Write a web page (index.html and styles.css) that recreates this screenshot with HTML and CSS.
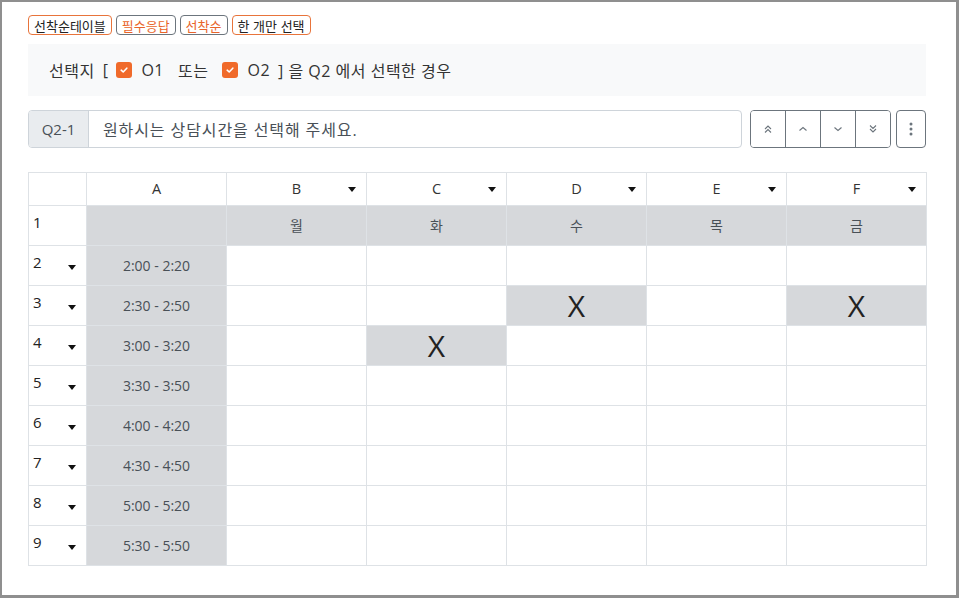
FILE: index.html
```html
<!DOCTYPE html>
<html lang="ko">
<head>
<meta charset="utf-8">
<link rel="stylesheet" href="styles.css">
</head>
<body>
<div class="frame">
  <div class="badges">
    <span class="badge badge-o">선착순테이블</span>
    <span class="badge badge-g">필수응답</span>
    <span class="badge badge-g">선착순</span>
    <span class="badge badge-o">한 개만 선택</span>
  </div>
  <div class="cond">
    <span>선택지</span><span class="br">[</span>
    <span class="chk"><svg width="10" height="10" viewBox="0 0 10 10"><path d="M2.2 5.2 L4.2 7 L7.8 3.2" fill="none" stroke="#fff" stroke-width="1.6" stroke-linecap="round" stroke-linejoin="round"/></svg></span>
    <span class="opt">O1</span><span class="or">또는</span>
    <span class="chk"><svg width="10" height="10" viewBox="0 0 10 10"><path d="M2.2 5.2 L4.2 7 L7.8 3.2" fill="none" stroke="#fff" stroke-width="1.6" stroke-linecap="round" stroke-linejoin="round"/></svg></span>
    <span class="opt">O2</span><span>] 을 Q2 에서 선택한 경우</span>
  </div>
  <div class="qrow">
    <div class="igroup">
      <span class="iprefix">Q2-1</span>
      <span class="ifield">원하시는 상담시간을 선택해 주세요.</span>
    </div>
    <div class="btngroup">
      <button class="btn"><svg width="12" height="12" viewBox="0 0 12 12"><path d="M3 6 L6 3 L9 6 M3 9.5 L6 6.5 L9 9.5" fill="none" stroke="#6c757d" stroke-width="1.1"/></svg></button>
      <button class="btn"><svg width="12" height="12" viewBox="0 0 12 12"><path d="M2.5 7.5 L6 4.5 L9.5 7.5" fill="none" stroke="#6c757d" stroke-width="1.1"/></svg></button>
      <button class="btn"><svg width="12" height="12" viewBox="0 0 12 12"><path d="M2.5 4.5 L6 7.5 L9.5 4.5" fill="none" stroke="#6c757d" stroke-width="1.1"/></svg></button>
      <button class="btn"><svg width="12" height="12" viewBox="0 0 12 12"><path d="M3 2.5 L6 5.5 L9 2.5 M3 6 L6 9 L9 6" fill="none" stroke="#6c757d" stroke-width="1.1"/></svg></button>
    </div>
    <button class="btn kebab"><svg width="4" height="14" viewBox="0 0 4 14"><circle cx="2" cy="2" r="1.5" fill="#6c757d"/><circle cx="2" cy="7" r="1.5" fill="#6c757d"/><circle cx="2" cy="12" r="1.5" fill="#6c757d"/></svg></button>
  </div>
  <table class="grid">
    <colgroup><col class="c0"><col class="cw"><col class="cw"><col class="cw"><col class="cw"><col class="cw"><col class="cw"></colgroup>
    <thead>
      <tr>
        <th></th>
        <th><div class="hd">A</div></th>
        <th><div class="hd">B<i class="caret"></i></div></th>
        <th><div class="hd">C<i class="caret"></i></div></th>
        <th><div class="hd">D<i class="caret"></i></div></th>
        <th><div class="hd">E<i class="caret"></i></div></th>
        <th><div class="hd">F<i class="caret"></i></div></th>
      </tr>
    </thead>
    <tbody>
      <tr>
        <td class="rh"><div class="rhin"><span>1</span></div></td>
        <td class="g"></td><td class="g">월</td><td class="g">화</td><td class="g">수</td><td class="g">목</td><td class="g">금</td>
      </tr>
      <tr>
        <td class="rh"><div class="rhin"><span>2</span><i class="caret"></i></div></td>
        <td class="g">2:00 - 2:20</td><td></td><td></td><td></td><td></td><td></td>
      </tr>
      <tr>
        <td class="rh"><div class="rhin"><span>3</span><i class="caret"></i></div></td>
        <td class="g">2:30 - 2:50</td><td></td><td></td><td class="g x">X</td><td></td><td class="g x">X</td>
      </tr>
      <tr>
        <td class="rh"><div class="rhin"><span>4</span><i class="caret"></i></div></td>
        <td class="g">3:00 - 3:20</td><td></td><td class="g x">X</td><td></td><td></td><td></td>
      </tr>
      <tr>
        <td class="rh"><div class="rhin"><span>5</span><i class="caret"></i></div></td>
        <td class="g">3:30 - 3:50</td><td></td><td></td><td></td><td></td><td></td>
      </tr>
      <tr>
        <td class="rh"><div class="rhin"><span>6</span><i class="caret"></i></div></td>
        <td class="g">4:00 - 4:20</td><td></td><td></td><td></td><td></td><td></td>
      </tr>
      <tr>
        <td class="rh"><div class="rhin"><span>7</span><i class="caret"></i></div></td>
        <td class="g">4:30 - 4:50</td><td></td><td></td><td></td><td></td><td></td>
      </tr>
      <tr>
        <td class="rh"><div class="rhin"><span>8</span><i class="caret"></i></div></td>
        <td class="g">5:00 - 5:20</td><td></td><td></td><td></td><td></td><td></td>
      </tr>
      <tr>
        <td class="rh"><div class="rhin"><span>9</span><i class="caret"></i></div></td>
        <td class="g">5:30 - 5:50</td><td></td><td></td><td></td><td></td><td></td>
      </tr>
    </tbody>
  </table>
</div>
</body>
</html>
```

FILE: styles.css
```css
* { box-sizing: border-box; }
html, body { margin: 0; padding: 0; background: #fff; }
body {
  font-family: "Open Sans", "Noto Sans", "Noto Sans CJK KR", sans-serif;
  color: #333;
}
.frame {
  width: 959px;
  height: 598px;
  border: 2px solid #8f8f8f;
  border-right-width: 3px;
  border-bottom-width: 3px;
  padding: 13px 0 0 26px;
}
.badges { display: flex; gap: 4px; height: 20px; }
.badge {
  display: inline-flex;
  align-items: center;
  height: 20px;
  padding: 0 5px;
  border: 1px solid #e8743b;
  border-radius: 4px;
  font-family: "Noto Sans CJK KR", sans-serif;
  font-size: 13px;
  color: #222;
}
.badge-g { border-color: #6c757d; color: #e8642a; }
.cond {
  margin-top: 9px;
  width: 898px;
  height: 52px;
  background: #f8f9fa;
  display: flex;
  align-items: center;
  padding-left: 21px;
  font-size: 16px;
  letter-spacing: 0.5px;
  color: #333;
  font-family: "Open Sans", "Noto Sans CJK KR", sans-serif;
}
.br { margin-left: 8px; margin-right: 8px; }
.chk {
  width: 16px; height: 16px;
  border-radius: 3px;
  background: #f06a2a;
  display: inline-flex; align-items: center; justify-content: center;
}
.opt { margin-left: 9px; margin-right: 8px; }
.or { margin-left: 6px; margin-right: 14px; }
.qrow { margin-top: 14px; display: flex; width: 898px; height: 38px; }
.igroup {
  width: 714px;
  display: flex;
  border: 1px solid #ced4da;
  border-radius: 4px;
  overflow: hidden;
}
.iprefix {
  width: 60px;
  background: #e9ecef;
  border-right: 1px solid #ced4da;
  display: flex; align-items: center; justify-content: center;
  font-size: 15px; color: #495057;
}
.ifield {
  display: flex; align-items: center;
  padding-left: 14px;
  font-size: 16px; color: #495057;
  letter-spacing: 0.9px;
}
.btngroup {
  margin-left: 8px;
  display: flex;
  border: 1px solid #6c757d;
  border-radius: 4px;
  overflow: hidden;
  width: 141px;
}
.btn {
  background: #fff;
  border: 0;
  padding: 0;
  display: flex; align-items: center; justify-content: center;
  flex: 1;
  height: 100%;
}
.btngroup .btn + .btn { border-left: 1px solid #6c757d; }
.kebab {
  flex: none;
  margin-left: 5px;
  width: 30px;
  border: 1px solid #6c757d;
  border-radius: 4px;
}
.grid {
  margin-top: 24px;
  border-collapse: collapse;
  table-layout: fixed;
  width: 898px;
  font-size: 14px;
  color: #495057;
}
.c0 { width: 58px; }
.cw { width: 140px; }
.grid th, .grid td {
  border: 1px solid #dee2e6;
  padding: 0;
  text-align: center;
  vertical-align: middle;
  line-height: 1;
}
.grid thead th { height: 33px; font-weight: normal; font-size: 14.5px; color: #333; }
.grid tbody td { height: 40px; }
.hd { position: relative; }
.hd .caret { position: absolute; right: 10px; top: 50%; margin-top: -2px; }
.caret {
  display: inline-block;
  width: 0; height: 0;
  border-left: 4.5px solid transparent;
  border-right: 4.5px solid transparent;
  border-top: 5px solid #111;
}
.rhin {
  display: flex;
  justify-content: space-between;
  align-items: center;
  padding: 0 10px 0 4px;
  font-size: 15px;
  color: #222;
}
.rhin span { position: relative; top: -3px; }
.rhin .caret { position: relative; top: 2px; }
.grid td.g { background: #d6d8db; }
.grid td.x { font-size: 30px; color: #222; font-family: "Open Sans", sans-serif; }
```
